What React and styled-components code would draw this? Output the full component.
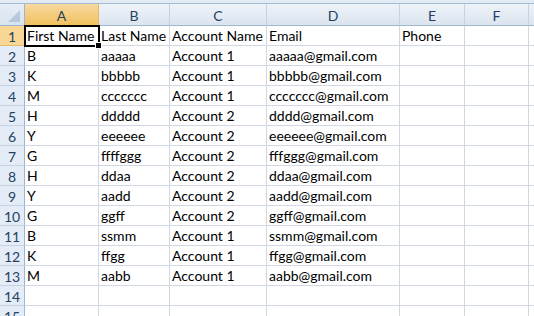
import React from "react";
import styled, { createGlobalStyle } from "styled-components";

const GlobalStyle = createGlobalStyle`
  html, body { margin: 0; padding: 0; background: #ffffff; overflow: hidden; }
  body { font-family: Lato, "Liberation Sans", sans-serif; }
`;

// G is only a sliver at the right edge, so its label stays out of view
const columns = ["A", "B", "C", "D", "E", "F", ""];
const widths = [25, 74, 71, 97, 133, 65, 64, 60];

const rows = [
  ["First Name", "Last Name", "Account Name", "Email", "Phone"],
  ["B", "aaaaa", "Account 1", "aaaaa@gmail.com"],
  ["K", "bbbbb", "Account 1", "bbbbb@gmail.com"],
  ["M", "ccccccc", "Account 1", "ccccccc@gmail.com"],
  ["H", "ddddd", "Account 2", "dddd@gmail.com"],
  ["Y", "eeeeee", "Account 2", "eeeeee@gmail.com"],
  ["G", "ffffggg", "Account 2", "fffggg@gmail.com"],
  ["H", "ddaa", "Account 2", "ddaa@gmail.com"],
  ["Y", "aadd", "Account 2", "aadd@gmail.com"],
  ["G", "ggff", "Account 2", "ggff@gmail.com"],
  ["B", "ssmm", "Account 1", "ssmm@gmail.com"],
  ["K", "ffgg", "Account 1", "ffgg@gmail.com"],
  ["M", "aabb", "Account 1", "aabb@gmail.com"],
  [],
  [],
];

export default function App() {
  return (
    <>
      <GlobalStyle />
      <Sheet>
        <TopStrip />
        <Grid>
          <Corner>
            <svg width="24" height="21" viewBox="0 0 24 21">
              <polygon points="20,6 20,18 8,18" fill="#b9c9dc" />
            </svg>
          </Corner>
          {columns.map((c, i) => (
            <ColHead key={i} selected={i === 0}>
              {c}
            </ColHead>
          ))}
          {rows.map((r, ri) => (
            <React.Fragment key={ri}>
              <RowHead selected={ri === 0}>{ri + 1}</RowHead>
              {columns.map((c, ci) => (
                <Cell key={ci} active={ri === 0 && ci === 0}>
                  {r[ci] || ""}
                  {ri === 0 && ci === 0 && <Handle />}
                </Cell>
              ))}
            </React.Fragment>
          ))}
        </Grid>
      </Sheet>
    </>
  );
}

const Sheet = styled.div`
  width: 534px;
  height: 316px;
  overflow: hidden;
  display: flex;
  flex-direction: column;
`;

const TopStrip = styled.div`
  height: 3px;
  background: #e3ebf5;
  border-bottom: 1px solid #a5bad1;
  flex-shrink: 0;
`;

const Grid = styled.div`
  display: grid;
  grid-template-columns: ${widths.map((w) => w + "px").join(" ")};
  grid-template-rows: 22px;
  grid-auto-rows: 20px;
`;

const Corner = styled.div`
  box-sizing: border-box;
  border-right: 1px solid #9eb6ce;
  border-bottom: 1px solid #9eb6ce;
  background: linear-gradient(#e6edf6, #d9e3ef);
  display: flex;
`;

const ColHead = styled.div`
  box-sizing: border-box;
  border-right: 1px solid ${(p) => (p.selected ? "#e7b96a" : "#c5d2e2")};
  border-bottom: 1px solid ${(p) => (p.selected ? "#c8973f" : "#9eb6ce")};
  background: ${(p) =>
    p.selected
      ? "linear-gradient(#f9d99f, #f1c15f)"
      : "linear-gradient(#eef3f9, #dbe4ef)"};
  color: #27415f;
  font-size: 14px;
  display: flex;
  align-items: center;
  justify-content: center;
  padding-top: 1px;
`;

const RowHead = styled.div`
  box-sizing: border-box;
  border-right: 1px solid ${(p) => (p.selected ? "#c8973f" : "#9eb6ce")};
  border-bottom: 1px solid ${(p) => (p.selected ? "#e7b96a" : "#c5d2e2")};
  background: ${(p) => (p.selected ? "#f9d797" : "#e4ecf7")};
  color: #27415f;
  font-size: 14px;
  display: flex;
  align-items: center;
  justify-content: center;
  padding-top: 1px;
`;

const Cell = styled.div`
  position: relative;
  box-sizing: border-box;
  border-right: 1px solid #d0d7e5;
  border-bottom: 1px solid #d0d7e5;
  color: #000;
  font-size: 14px;
  line-height: 20px;
  padding-left: 2px;
  white-space: nowrap;
  overflow: visible;
  z-index: ${(p) => (p.active ? 2 : "auto")};
  ${(p) =>
    p.active &&
    `
    outline: 2px solid #000;
    outline-offset: -1px;
  `}
`;

const Handle = styled.span`
  position: absolute;
  right: -4px;
  bottom: -4px;
  width: 5px;
  height: 5px;
  background: #000;
  border: 1px solid #fff;
`;
